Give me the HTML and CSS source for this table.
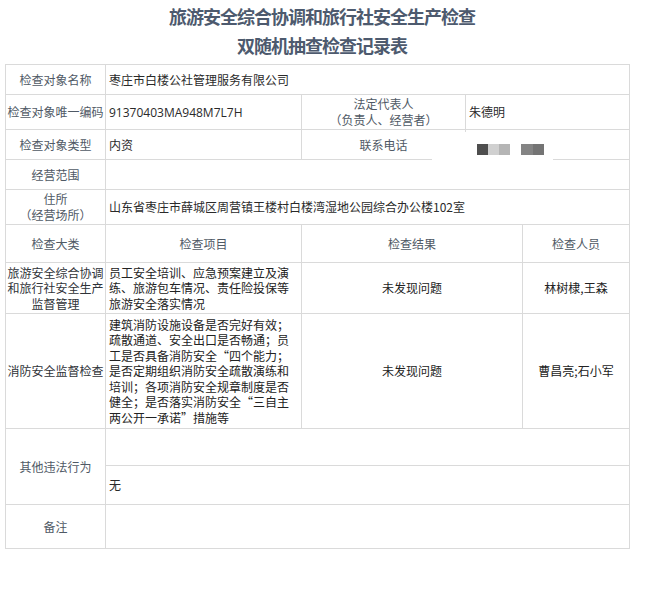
FILE: index.html
```html
<!DOCTYPE html>
<html lang="zh-CN">
<head>
<meta charset="utf-8">
<title>旅游安全综合协调和旅行社安全生产检查双随机抽查检查记录表</title>
<link rel="stylesheet" href="styles.css">
</head>
<body>
<div class="page">
  <h1 class="title">旅游安全综合协调和旅行社安全生产检查<br>双随机抽查检查记录表</h1>
  <table class="record">
    <colgroup>
      <col class="c1"><col class="c2"><col class="c3"><col class="c4"><col class="c5">
    </colgroup>
    <tr class="h30">
      <th>检查对象名称</th>
      <td colspan="4" class="val">枣庄市白楼公社管理服务有限公司</td>
    </tr>
    <tr class="h35">
      <th>检查对象唯一编码</th>
      <td class="val"><span class="latin">91370403MA948M7L7H</span></td>
      <th class="two">法定代表人<br>（负责人、经营者）</th>
      <td colspan="2" class="val">朱德明</td>
    </tr>
    <tr class="h30">
      <th>检查对象类型</th>
      <td class="val">内资</td>
      <th>联系电话</th>
      <td colspan="2" class="val phone">
        <div class="mask"><span class="px p1"></span><span class="px p2"></span><span class="px p3"></span><span class="gap"></span><span class="px p4"></span><span class="px p5"></span></div>
      </td>
    </tr>
    <tr class="h30">
      <th>经营范围</th>
      <td colspan="4" class="val"></td>
    </tr>
    <tr class="h35">
      <th class="two">住所<br>（经营场所）</th>
      <td colspan="4" class="val">山东省枣庄市薛城区周营镇王楼村白楼湾湿地公园综合办公楼102室</td>
    </tr>
    <tr class="h38">
      <th>检查大类</th>
      <th>检查项目</th>
      <th colspan="2">检查结果</th>
      <th>检查人员</th>
    </tr>
    <tr class="h51">
      <td class="cat">旅游安全综合协调<br>和旅行社安全生产<br>监督管理</td>
      <td class="item">员工安全培训、应急预案建立及演<br>练、旅游包车情况、责任险投保等<br>旅游安全落实情况</td>
      <td colspan="2" class="mid">未发现问题</td>
      <td class="mid">林树棣,王森</td>
    </tr>
    <tr class="h115">
      <td class="cat">消防安全监督检查</td>
      <td class="item">建筑消防设施设备是否完好有效；<br>疏散通道、安全出口是否畅通；员<br>工是否具备消防安全“四个能力；<br>是否定期组织消防安全疏散演练和<br>培训；各项消防安全规章制度是否<br>健全；是否落实消防安全“三自主<br>两公开一承诺”措施等</td>
      <td colspan="2" class="mid">未发现问题</td>
      <td class="mid">曹昌亮;石小军</td>
    </tr>
    <tr class="h37">
      <th rowspan="2">其他违法行为</th>
      <td colspan="4" class="val"></td>
    </tr>
    <tr class="h39">
      <td colspan="4" class="val">无</td>
    </tr>
    <tr class="h44">
      <th>备注</th>
      <td colspan="4" class="val"></td>
    </tr>
  </table>
</div>
</body>
</html>
```

FILE: styles.css
```css
html, body {
  margin: 0;
  padding: 0;
  background: #ffffff;
}

body {
  font-family: "Noto Sans CJK SC", "Noto Sans", sans-serif;
  font-size: 12px;
  color: #222222;
}

.page {
  width: 648px;
  padding-top: 2px;
}

.title {
  margin: 0 0 5px 0;
  text-align: center;
  font-size: 18px;
  line-height: 28.5px;
  letter-spacing: -1px;
  font-weight: 700;
  color: #4d5a6e;
  padding-right: 4px;
}

.record {
  margin-left: 5px;
  width: 625px;
  border-collapse: collapse;
  table-layout: fixed;
}

.c1 { width: 100px; }
.c2 { width: 196px; }
.c3 { width: 164px; }
.c4 { width: 57px; }
.c5 { width: 107px; }

.record th,
.record td {
  border: 1px solid #dadada;
  padding: 0 3px;
  vertical-align: middle;
  line-height: 16px;
}

.record th {
  font-weight: 400;
  color: #4f5965;
  text-align: center;
  padding: 0 1px;
  white-space: nowrap;
}

.record .val {
  text-align: left;
  color: #2a2a2a;
}

.latin {
  font-family: "Open Sans", "Noto Sans CJK SC", sans-serif;
}

.h30 { height: 30px; }
.h35 { height: 35px; }
.h37 { height: 37px; }
.h38 { height: 38px; }
.h39 { height: 39px; }
.h44 { height: 44px; }
.h51 { height: 51px; }
.h115 { height: 115px; }

.record .cat {
  text-align: center;
  color: #2f3338;
  padding: 0 1px;
  line-height: 15.5px;
  white-space: nowrap;
}

.record .item {
  text-align: left;
  color: #222222;
  line-height: 15.5px;
  white-space: nowrap;
  padding: 0 2px 0 3px;
}

.record .mid {
  text-align: center;
  color: #222222;
}

.record .phone {
  position: relative;
}

.mask {
  position: absolute;
  left: -34px;
  top: 2px;
  width: 121px;
  height: 36px;
  background: #ffffff;
  display: flex;
  align-items: flex-start;
  padding: 12px 0 0 45px;
  box-sizing: border-box;
}

.px {
  display: block;
  width: 11px;
  height: 11px;
}

.gap {
  display: block;
  width: 11px;
}

.p1 { background: #4e4e4e; }
.p2 { background: #d0d0d0; }
.p3 { background: #b5b5b5; }
.p4 { background: #848484; width: 12px; }
.p5 { background: #747474; }
```
